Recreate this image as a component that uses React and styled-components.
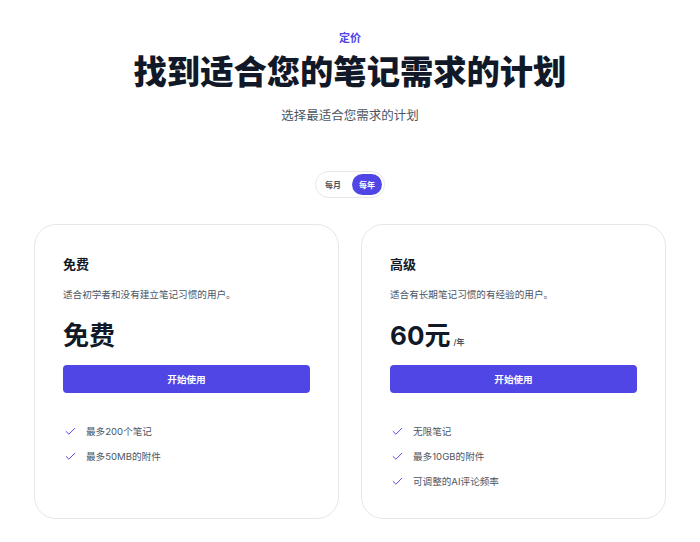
import React, { useState } from 'react';
import styled, { createGlobalStyle } from 'styled-components';

const GlobalStyle = createGlobalStyle`
  body {
    margin: 0;
    background: #fff;
    font-family: Inter, "Noto Sans CJK SC", sans-serif;
    color: #111827;
  }
`;

const Page = styled.div`
  display: flex;
  flex-direction: column;
  align-items: center;
  padding: 30px 34px 24px;
`;

const Eyebrow = styled.div`
  font-size: 11px;
  line-height: 16px;
  font-weight: 600;
  color: #4f46e5;
`;

const Heading = styled.h1`
  margin: 7px 0 0;
  font-size: 33.3px;
  line-height: 38px;
  font-weight: 800;
  color: #111827;
`;

const Subtitle = styled.p`
  margin: 16px 0 0;
  font-size: 12.5px;
  line-height: 18px;
  color: #4b5563;
`;

const Toggle = styled.div`
  margin-top: 46px;
  display: flex;
  gap: 4px;
  padding: 2px;
  border: 1px solid #e5e7eb;
  border-radius: 999px;
`;

const ToggleButton = styled.button`
  height: 21px;
  padding: 0 7px;
  border: none;
  border-radius: 999px;
  font-family: inherit;
  font-size: 8px;
  font-weight: 600;
  cursor: pointer;
  background: ${(p) => (p.$active ? '#4f46e5' : 'transparent')};
  color: ${(p) => (p.$active ? '#fff' : '#4b5563')};
`;

const Cards = styled.div`
  margin-top: 26px;
  width: 100%;
  display: grid;
  grid-template-columns: 1fr 1fr;
  gap: 22px;
`;

const Card = styled.div`
  border: 1px solid #e5e7eb;
  border-radius: 22px;
  padding: 29px 28px 29px;
  display: flex;
  flex-direction: column;
`;

const PlanName = styled.h3`
  margin: 0;
  font-size: 13px;
  line-height: 20px;
  font-weight: 600;
  color: #111827;
`;

const Description = styled.p`
  margin: 14px 0 0;
  font-size: 9.6px;
  line-height: 14px;
  color: #4b5563;
`;

const Price = styled.div`
  margin-top: 21px;
  display: flex;
  align-items: baseline;
  gap: 3px;
`;

const Amount = styled.span`
  font-size: 26px;
  line-height: 26px;
  font-weight: 700;
  color: #111827;
`;

const Period = styled.span`
  font-size: 8px;
  font-weight: 600;
  color: #4b5563;
`;

const CtaButton = styled.button`
  margin-top: 16px;
  height: 28px;
  border: none;
  border-radius: 4px;
  background: #4f46e5;
  color: #fff;
  font-family: inherit;
  font-size: 9.6px;
  font-weight: 600;
  cursor: pointer;
`;

const Features = styled.ul`
  list-style: none;
  margin: 31px 0 0;
  padding: 0;
  display: flex;
  flex-direction: column;
  gap: 10px;
`;

const Feature = styled.li`
  display: flex;
  align-items: center;
  gap: 9px;
  padding-left: 1px;
  font-size: 9.6px;
  line-height: 15px;
  color: #4b5563;
`;

const CheckIcon = () => (
  <svg width="13" height="13" viewBox="0 0 24 24" fill="none" stroke="#4f46e5" strokeWidth="1.8" strokeLinecap="round" strokeLinejoin="round">
    <path d="M20 6 9 17l-5-5" />
  </svg>
);

const plans = [
  {
    name: '免费',
    description: '适合初学者和没有建立笔记习惯的用户。',
    price: '免费',
    features: ['最多200个笔记', '最多50MB的附件'],
  },
  {
    name: '高级',
    description: '适合有长期笔记习惯的有经验的用户。',
    price: '60元',
    period: '/年',
    features: ['无限笔记', '最多10GB的附件', '可调整的AI评论频率'],
  },
];

export default function App() {
  const [yearly, setYearly] = useState(true);

  return (
    <>
      <GlobalStyle />
      <Page>
        <Eyebrow>定价</Eyebrow>
        <Heading>找到适合您的笔记需求的计划</Heading>
        <Subtitle>选择最适合您需求的计划</Subtitle>
        <Toggle>
          <ToggleButton $active={!yearly} onClick={() => setYearly(false)}>每月</ToggleButton>
          <ToggleButton $active={yearly} onClick={() => setYearly(true)}>每年</ToggleButton>
        </Toggle>
        <Cards>
          {plans.map((plan) => (
            <Card key={plan.name}>
              <PlanName>{plan.name}</PlanName>
              <Description>{plan.description}</Description>
              <Price>
                <Amount>{plan.price}</Amount>
                {plan.period && <Period>{plan.period}</Period>}
              </Price>
              <CtaButton>开始使用</CtaButton>
              <Features>
                {plan.features.map((f) => (
                  <Feature key={f}>
                    <CheckIcon />
                    {f}
                  </Feature>
                ))}
              </Features>
            </Card>
          ))}
        </Cards>
      </Page>
    </>
  );
}
